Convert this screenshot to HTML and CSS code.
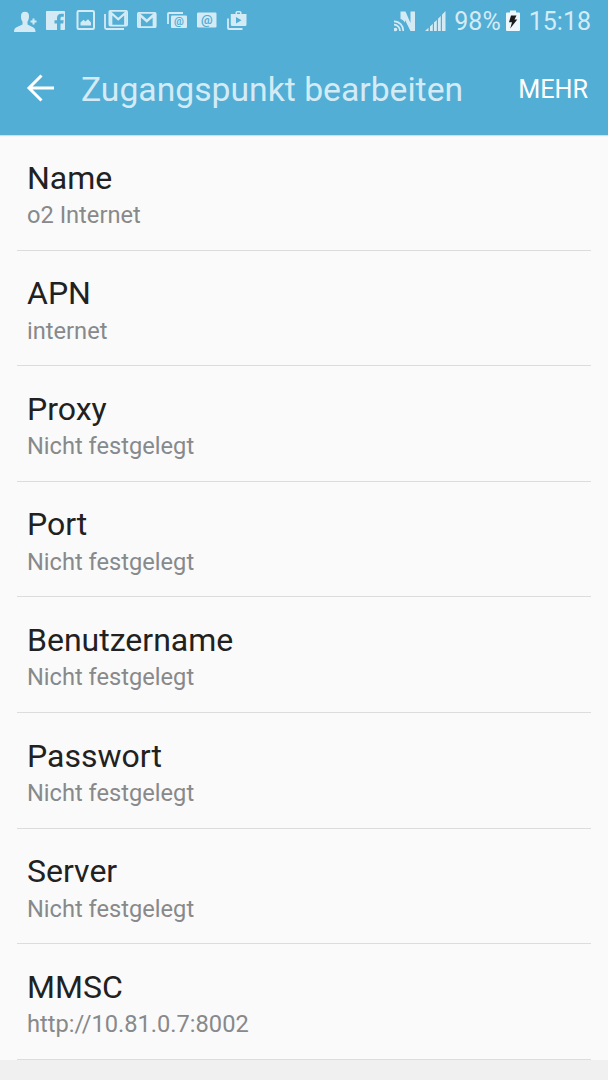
FILE: index.html
```
<!DOCTYPE html>
<html lang="de">
<head>
  <meta charset="UTF-8">
  <meta name="viewport" content="width=device-width, initial-scale=1.0">
  <link rel="stylesheet" href="styles.css">
  <title>Zugangspunkt bearbeiten</title>
</head>
<body>
  <header>
    <div class="status-bar">
      <div class="notifications">
        <!-- contact added -->
        <svg width="24" height="24" viewBox="0 0 24 24">
          <path fill="currentColor" d="M11 3.800C14 3.800 15.200 5.800 15 8.500C15 11 14.300 12.500 13.500 13.500V16.500L18.500 19C20.500 20 21.500 21 21.500 24H0C0 21 1 20 3 19L8.500 16.500V13.500C7.600 12.500 7 11 7 8.500C6.800 5.800 8.200 3.800 11 3.800Z"/>
          <path stroke="currentColor" stroke-width="2" d="M16.500 13.500H22.500M19.500 10.500V16.500"/>
        </svg>
        <!-- facebook -->
        <svg width="20" height="24" viewBox="0 0 20 24">
          <path fill="currentColor" fill-rule="evenodd" d="M1 3H18C18.600 3 19 3.400 19 4V21C19 21.600 18.600 22 18 22H14.500V15.500H17.200L17.700 12.300H14.500V10.300C14.500 9.200 15 8.700 16.100 8.700H17.800V5.700H15.200C12.400 5.700 11 7.400 11 10V12.300H8.500V15.500H11V22H1C.4 22 0 21.600 0 21V4C0 3.400.4 3 1 3Z"/>
        </svg>
        <!-- picture -->
        <svg width="20" height="24" viewBox="0 0 20 24">
          <rect x="1.500" y="3" width="16.500" height="18" rx="1.200" fill="none" stroke="currentColor" stroke-width="2"/>
          <path fill="currentColor" d="M4.500 17.500V14.500L7.500 11.800L9.300 13.500L12 11.300L15 14.500V17.500Z"/>
        </svg>
        <!-- stacked mails -->
        <svg width="24" height="24" viewBox="0 0 24 24">
          <path fill="none" stroke="currentColor" stroke-width="1.800" d="M1 6V19.500Q1 21 2.500 21H20"/>
          <rect x="5.400" y="2.900" width="17.700" height="14.700" rx="1" fill="none" stroke="currentColor" stroke-width="1.800"/>
          <path fill="none" stroke="currentColor" stroke-width="2.300" d="M7.200 17.500V5L14.250 11.300L21.300 5V17.500"/>
        </svg>
        <!-- mail -->
        <svg width="20" height="24" viewBox="0 0 20 24">
          <rect x=".9" y="4.900" width="17.800" height="14.300" rx="1" fill="none" stroke="currentColor" stroke-width="1.800"/>
          <path fill="none" stroke="currentColor" stroke-width="2.500" d="M2.700 19.200V6.800L9.800 13L16.900 6.800V19.200"/>
        </svg>
        <!-- stacked @ -->
        <svg width="20" height="24" viewBox="0 0 20 24">
          <path fill="none" stroke="currentColor" stroke-width="1.800" d="M1 16V5.800Q1 5 2 5H16"/>
          <rect x="4" y="7.500" width="16" height="12.500" rx="1" fill="currentColor"/>
          <text class="at" x="12" y="16.800" font-size="11">@</text>
        </svg>
        <!-- @ -->
        <svg width="20" height="24" viewBox="0 0 20 24">
          <rect x="0" y="4.500" width="19.500" height="15" rx="1.200" fill="currentColor"/>
          <text class="at" x="9.750" y="15.500" font-size="13">@</text>
        </svg>
        <!-- play store -->
        <svg width="20" height="24" viewBox="0 0 20 24">
          <path fill="none" stroke="currentColor" stroke-width="1.800" d="M1 10.500V20Q1 21 2 21H15.500"/>
          <path fill="none" stroke="currentColor" stroke-width="1.500" d="M9.200 7V4.800Q9.200 3.800 10.200 3.800H12.800Q13.800 3.800 13.800 4.800V7"/>
          <path fill="currentColor" fill-rule="evenodd" d="M3.800 6H19.500V16.500Q19.500 18 18 18H5.300Q3.800 18 3.800 16.500ZM9 9V15.500L14.500 12.200Z"/>
        </svg>
      </div>
      <div class="indicators">
        <!-- nfc -->
        <svg class="nfc" width="22" height="24" viewBox="0 0 22 24">
          <path fill="currentColor" d="M6.500 2.500H11.500L16.500 14V2.500H21V22H16.500L11 11V13.500C9.500 11.500 8.500 10.600 6.500 10Z"/>
          <g fill="none" stroke="currentColor" stroke-width="1.700">
            <path d="M0 12.300A9.200 9.200 0 0 1 9.200 22"/>
            <path d="M0 15.700A6 6 0 0 1 6 22"/>
          </g>
          <circle cx="1.500" cy="20.500" r="1.800" fill="currentColor"/>
        </svg>
        <!-- signal strength -->
        <svg class="signal" width="21" height="24" viewBox="0 0 21 24">
          <path fill="currentColor" d="M0 22L3.500 18.800V22ZM5 17.500L7.800 14.800V22H5ZM9 13.600L11.800 11V22H9ZM13 9.700L15.800 7V22H13ZM17 5.700L20.500 2V22H17Z"/>
        </svg>
        <span class="percent">98%</span>
        <!-- charging battery -->
        <svg class="battery" width="14" height="24" viewBox="0 0 14 24">
          <path fill="#eef7fb" d="M4 1.500H10V3.500H13Q14 3.500 14 4.500V21Q14 22 13 22H1Q0 22 0 21V4.500Q0 3.500 1 3.500H4Z"/>
          <path fill="#1c1c1c" d="M5 6.500H10.500L8.500 10.500H11.300L4.200 19.500L6 13.200H3Z"/>
        </svg>
        <span class="time">15:18</span>
      </div>
    </div>
    <div class="title-bar">
      <svg class="back" width="28" height="28" viewBox="0 0 28 28">
        <path fill="none" stroke="#fff" stroke-width="3" d="M15.500 1.500L3 14L15.500 26.500M3 14H28"/>
      </svg>
      <h1>Zugangspunkt bearbeiten</h1>
      <div class="more">MEHR</div>
    </div>
  </header>
  <main>
    <ul>
      <li>
        <h2>Name</h2>
        <p>o2 Internet</p>
      </li>
      <li>
        <h2>APN</h2>
        <p>internet</p>
      </li>
      <li>
        <h2>Proxy</h2>
        <p>Nicht festgelegt</p>
      </li>
      <li>
        <h2>Port</h2>
        <p>Nicht festgelegt</p>
      </li>
      <li>
        <h2>Benutzername</h2>
        <p>Nicht festgelegt</p>
      </li>
      <li>
        <h2>Passwort</h2>
        <p>Nicht festgelegt</p>
      </li>
      <li>
        <h2>Server</h2>
        <p>Nicht festgelegt</p>
      </li>
      <li>
        <h2>MMSC</h2>
        <p>http://10.81.0.7:8002</p>
      </li>
    </ul>
  </main>
</body>
</html>
```
FILE: styles.css
```
/* Reset default margin and padding */
body, h1, h2, p, ul, li {
  margin: 0;
  padding: 0;
}

body {
  font-family: Roboto, sans-serif;
  background-color: #f0f0f0;
  height: 1080px;
  overflow: hidden;
}

svg {
  display: block;
  flex: none;
}

header {
  box-sizing: border-box;
  height: 135px;
  background-color: #52aed5;
  box-shadow: 0 1px 1px #d8dcde;
  position: relative;
}

/* Status bar */
.status-bar {
  display: flex;
  justify-content: space-between;
  height: 42px;
  padding: 0 17px 0 14px;
  color: #d4ebf5;
}

.notifications {
  display: flex;
  gap: 10.2px;
  padding-top: 8px;
}

.notifications svg:first-child {
  margin-right: -2.2px;
}

.notifications svg:nth-child(4) {
  margin: 0 -2px;
}

.at {
  fill: #52aed5;
  font-weight: 700;
  text-anchor: middle;
}

.indicators {
  display: flex;
  align-items: center;
  font-size: 25px;
  line-height: 44px;
}

.indicators span {
  padding-top: 2px;
}

.signal {
  margin: 0 8px 0 9px;
}

.battery {
  margin: 0 9px 0 5px;
}

/* Title bar */
.title-bar {
  display: flex;
  align-items: center;
  height: 93px;
  padding: 0 20px 0 26px;
}

.back {
  margin-bottom: 2px;
}

.title-bar h1 {
  flex-grow: 1;
  margin-left: 27px;
  padding-top: 2px;
  color: #d4ebf5;
  font-size: 33.7px;
  font-weight: 400;
  white-space: nowrap;
}

.more {
  padding-top: 1px;
  color: #fff;
  font-size: 25.2px;
}

/* Settings list */
main {
  background-color: #fafafa;
  padding: 0 17px;
}

ul {
  list-style: none;
}

li {
  box-sizing: border-box;
  height: 115.6px;
  padding: 24.7px 10px 0;
  border-bottom: 1px solid #dcdcdc;
}

li h2 {
  color: #212121;
  font-size: 32px;
  font-weight: 400;
  line-height: 37.6px;
}

li p {
  margin-top: 3.8px;
  color: #87898b;
  font-size: 23.65px;
  line-height: 29px;
}
```
